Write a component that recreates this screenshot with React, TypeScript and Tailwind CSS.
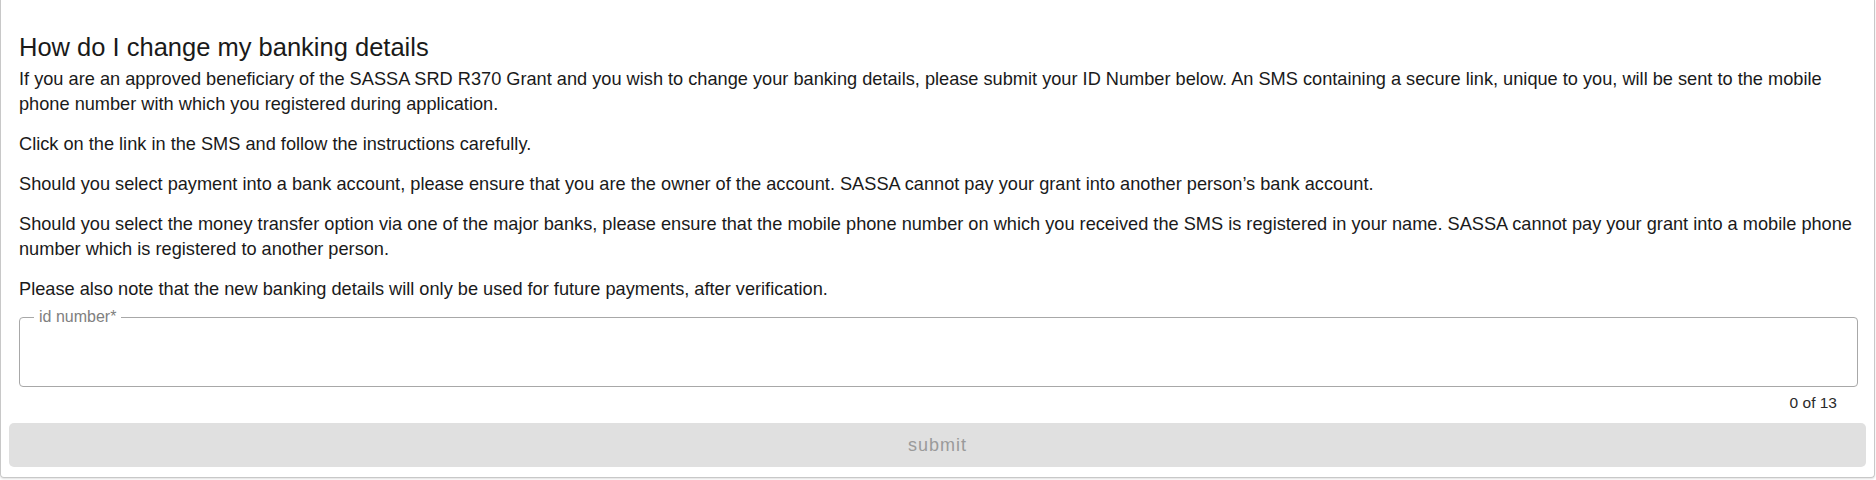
export default function App() {
  const paras = [
    "If you are an approved beneficiary of the SASSA SRD R370 Grant and you wish to change your banking details, please submit your ID Number below. An SMS containing a secure link, unique to you, will be sent to the mobile phone number with which you registered during application.",
    "Click on the link in the SMS and follow the instructions carefully.",
    "Should you select payment into a bank account, please ensure that you are the owner of the account. SASSA cannot pay your grant into another person\u2019s bank account.",
    "Should you select the money transfer option via one of the major banks, please ensure that the mobile phone number on which you received the SMS is registered in your name. SASSA cannot pay your grant into a mobile phone number which is registered to another person.",
    "Please also note that the new banking details will only be used for future payments, after verification.",
  ];

  return (
    <div className="w-[1876px] h-[480px] bg-white font-['Liberation_Sans',Arial,sans-serif] text-[#1a1a1a]">
      <div className="w-[1875px] h-[478px] border border-t-0 border-[#c8c8c8] rounded-b-[4px] shadow-[0_1px_2px_rgba(0,0,0,0.12)] pt-[31px]">
        <div className="px-[18px]">
          <h2 className="text-[25.5px] leading-[32px] font-normal mb-[4px]">How do I change my banking details</h2>
          {paras.map((p, i) => (
            <p key={i} className="text-[18.2px] leading-[25px] mb-[15px] last:mb-0">
              {p}
            </p>
          ))}

          <div className="relative mt-[13px] w-[1839px] h-[70px] border border-[#a8a8a8] rounded-[4px]">
            <span className="absolute left-[14px] top-[-11px] bg-white px-[5px] text-[16px] leading-[20px] text-[#808080]">
              id number*
            </span>
          </div>
          <div className="flex justify-end pr-[19px] mt-[7px] text-[15.5px] leading-[18px] text-[#2a2a2a]">
            0 of 13
          </div>
        </div>
        <div className="px-[8px] mt-[11px]">
          <button
            disabled
            className="w-[1857px] h-[44px] rounded-[5px] bg-[#e0e0e0] text-[18px] tracking-[1px] text-[#9a9a9a]"
          >
            submit
          </button>
        </div>
      </div>
    </div>
  );
}
